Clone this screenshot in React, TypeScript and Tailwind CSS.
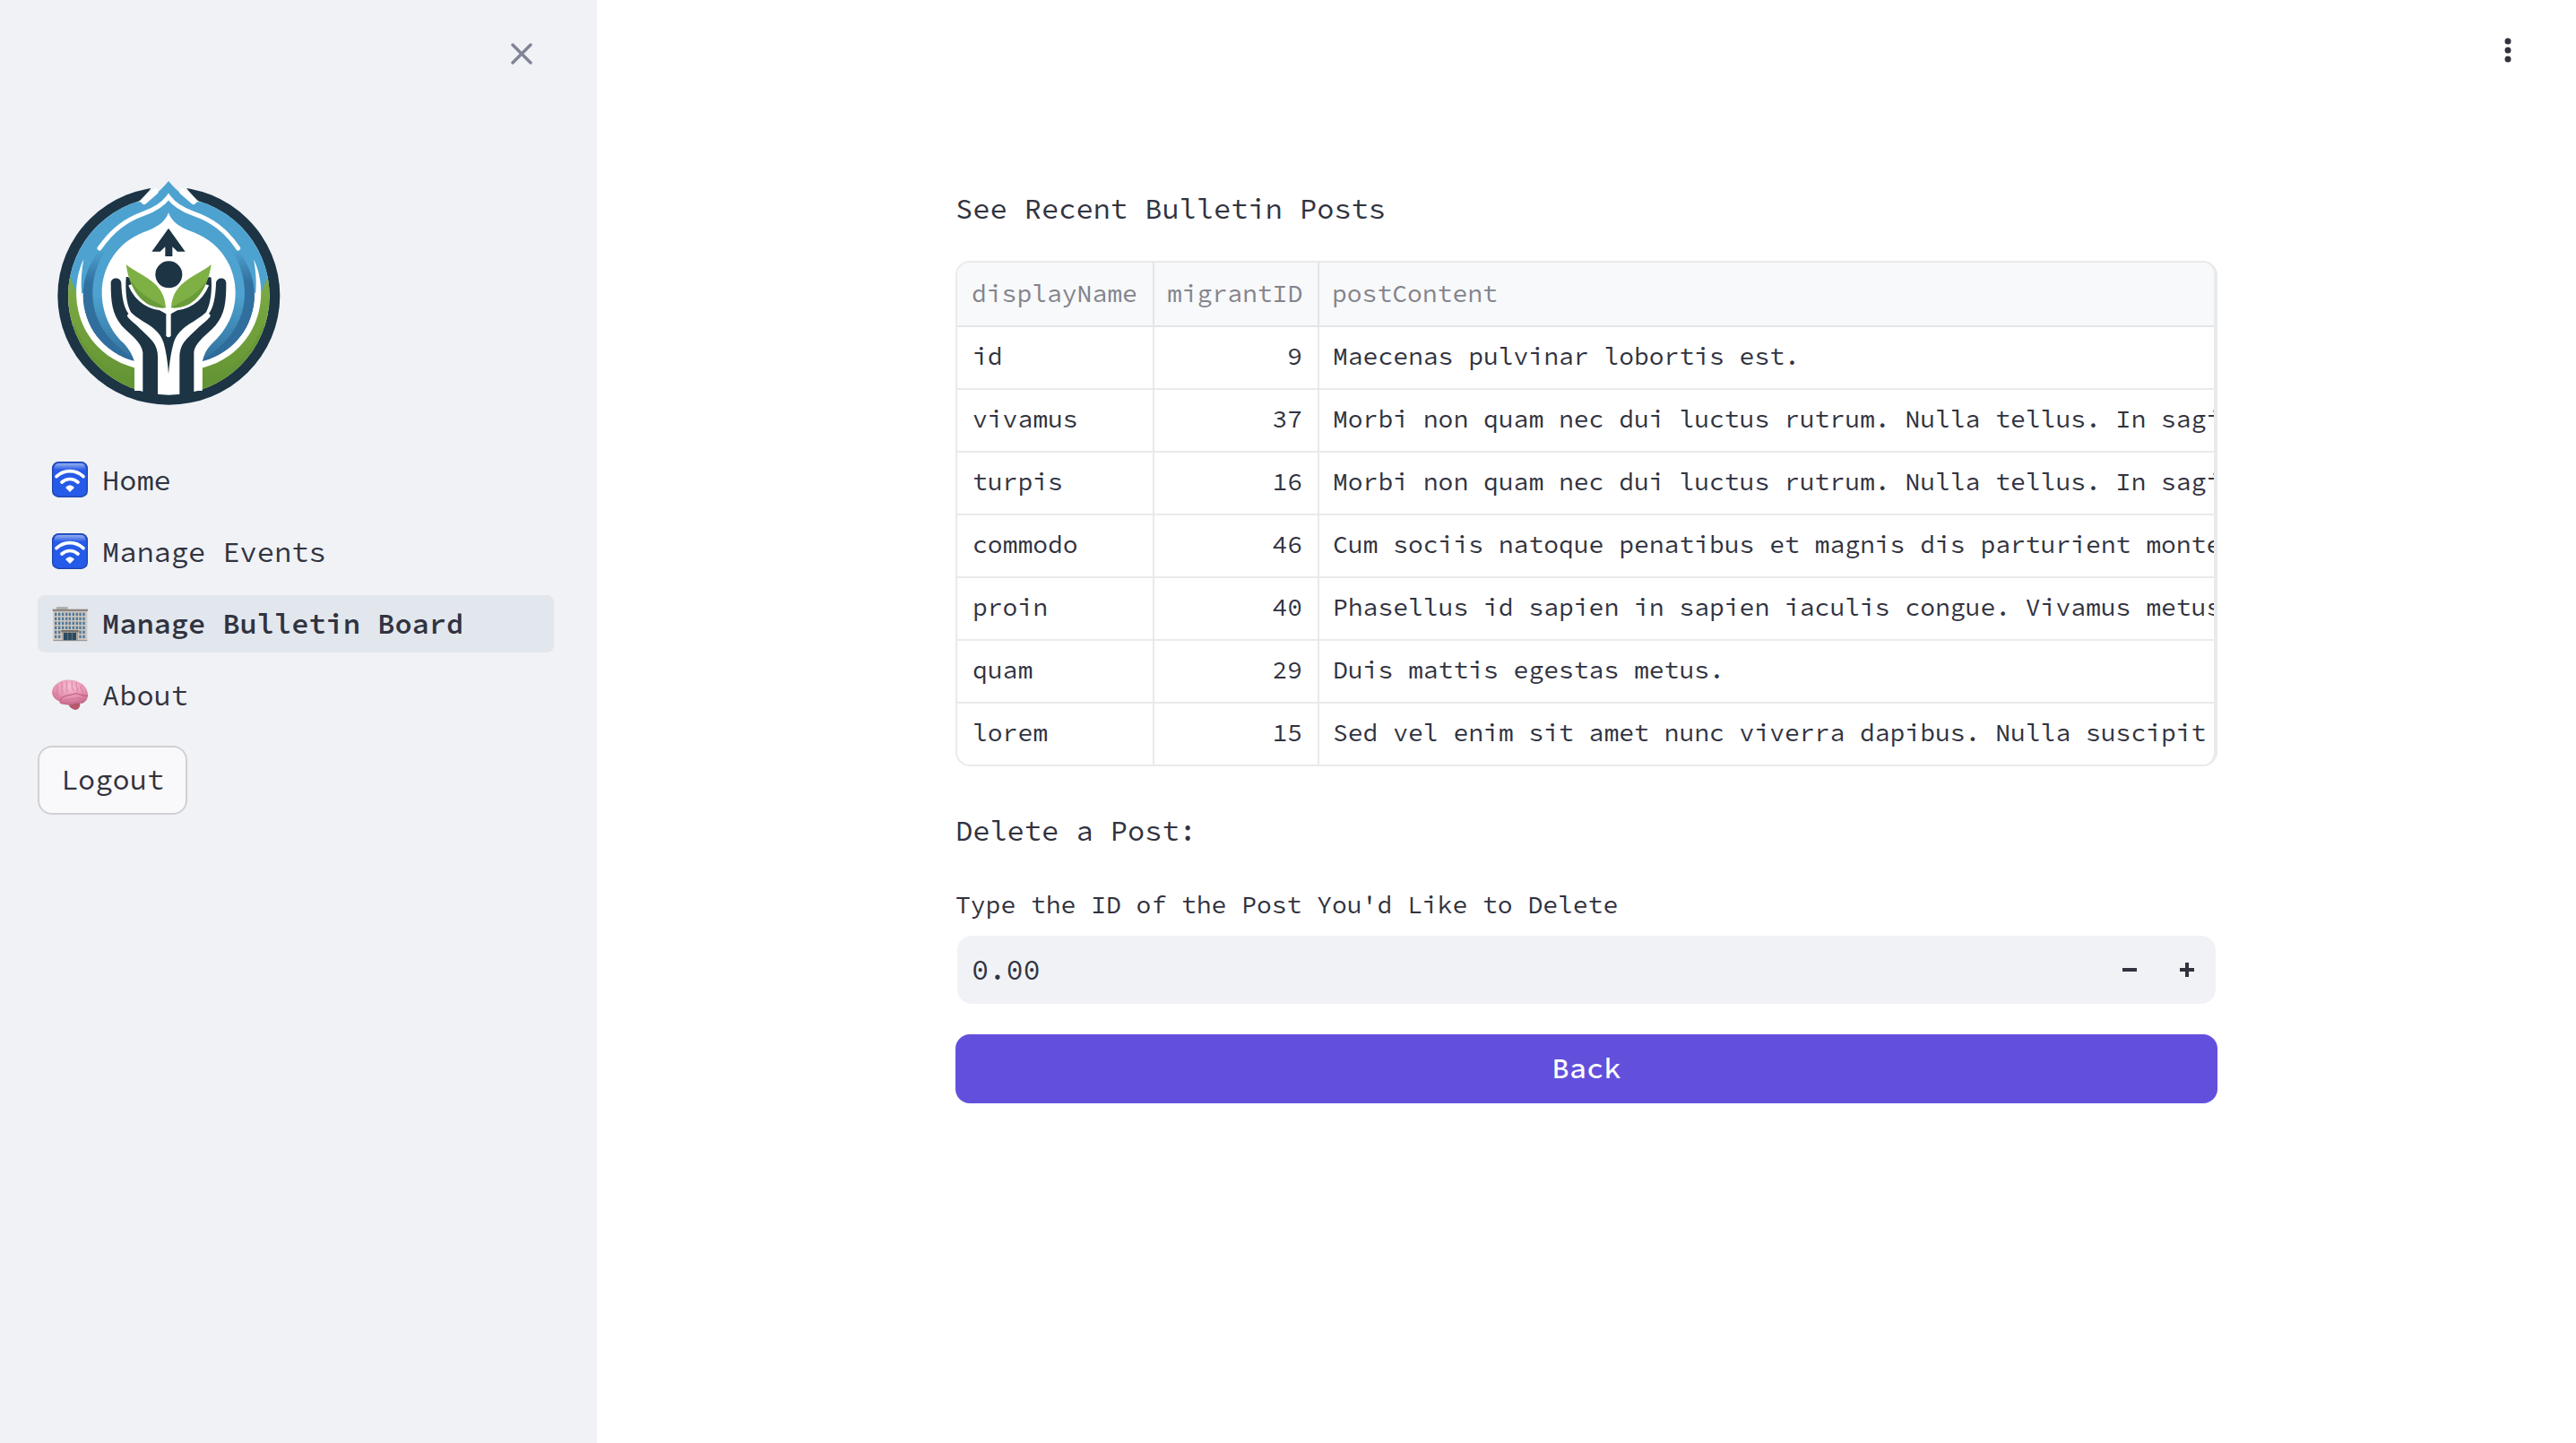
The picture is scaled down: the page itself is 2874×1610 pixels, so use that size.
import type { ReactNode } from 'react';

const NAVY = '#1c3444';

function Logo() {
  return (
    <svg viewBox="0 0 900 870" className="block h-[290px] w-[300px]">
      <defs>
        <linearGradient id="blueRing" x1="0" y1="0" x2="0" y2="1">
          <stop offset="0.3" stopColor="#4da2d0" />
          <stop offset="0.5" stopColor="#32719f" />
          <stop offset="1" stopColor="#2f6c9c" />
        </linearGradient>
        <linearGradient id="blueInner" x1="0" y1="0" x2="0" y2="1">
          <stop offset="0.6" stopColor="#4da2d0" />
          <stop offset="1" stopColor="#33739f" />
        </linearGradient>
        <linearGradient id="greenBand" x1="0" y1="0" x2="0" y2="1">
          <stop offset="0" stopColor="#80ae45" />
          <stop offset="1" stopColor="#619132" />
        </linearGradient>
        <clipPath id="disc">
          <ellipse cx="445" cy="450" rx="337" ry="332" />
        </clipPath>
      </defs>

      {/* outer ring */}
      <ellipse cx="445" cy="450" rx="372" ry="365" fill={NAVY} />
      <path d="M383 94 L400 60 H490 L507 94 Q520 110 560 150 H330 Q370 110 383 94Z" fill="#f0f2f6" />
      <ellipse cx="445" cy="450" rx="337" ry="332" fill="#fff" />

      {/* sky and grass bands */}
      <g clipPath="url(#disc)">
        <path d="M100 136 H790 V400 L751 452 L700 420 H190 L139 452 L100 400Z" fill="#4da2d0" />
        <path d="M100 350 L140 452 C150 550 210 650 330 690 V790 H100Z" fill="url(#greenBand)" />
        <path d="M790 350 L750 452 C740 550 680 650 557 690 V790 H790Z" fill="url(#greenBand)" />
        <path d="M128 545 C170 650 230 700 332 730 V790 H100Z M762 545 C720 650 660 700 557 730 V790 H790Z" fill="#649536" opacity=".75" />
      </g>

      {/* flame-shaped sky */}
      <path
        d="M444 66 C480 108 508 128 555 145 C640 178 700 240 740 320 L700 420 H190 L150 320 C190 240 250 178 335 145 C380 128 410 108 444 66Z"
        fill="#4da2d0"
      />
      <path
        d="M444 138 C475 180 510 192 560 212 C665 255 732 350 732 450 C732 550 665 640 559 670 L330 670 C225 640 158 550 158 450 C158 350 225 255 328 212 C380 192 413 180 444 138Z"
        fill="url(#blueRing)"
      />
      <path
        d="M444 138 C475 180 510 192 560 212 C645 250 699 350 699 440 C699 540 640 610 570 655 H320 C250 610 190 540 190 440 C190 350 245 250 328 212 C380 192 413 180 444 138Z"
        fill="url(#blueInner)"
      />

      {/* white drop */}
      <path
        d="M444 172 C462 218 500 225 545 245 C625 282 668 360 668 440 C668 505 640 565 590 610 C570 630 562 650 557 672 V768 H330 V672 C325 650 312 630 295 610 C250 570 221 505 221 440 C221 360 265 282 343 245 C388 225 426 218 444 172Z"
        fill="#fff"
      />

      {/* white outlines */}
      <g fill="none" stroke="#fff" strokeLinecap="round" strokeLinejoin="miter">
        <path d="M213 291 C260 225 305 195 360 175 C402 160 425 145 444 119 C463 145 486 160 528 175 C585 195 632 225 677 291" strokeWidth="15" />
        <path d="M362 134 L400 101 M528 134 L490 101" strokeWidth="20" />
      </g>
      <path d="M160 328 C125 400 125 500 175 580 C210 635 265 675 334 692 V670 C270 655 215 612 185 560 C150 490 145 405 160 328Z" fill="#fff" />
      <path d="M729 328 C764 400 764 500 714 580 C679 635 624 675 555 692 V670 C619 655 674 612 704 560 C739 490 744 405 729 328Z" fill="#fff" />

      {/* figure with arrow */}
      <path d="M444 224 L500 302 H474 L457 286 V318 H433 V286 L416 302 H388Z" fill={NAVY} />
      <circle cx="445" cy="379" r="45" fill={NAVY} />

      {/* arms and hands */}
      <path
        d="M251 408 C251 386 285 386 286 408 C287 450 295 495 312 512 C325 545 370 575 393 605 Q408 625 408 655 V780 H358 V640 C354 605 315 580 287 550 C255 510 251 470 251 408Z"
        fill={NAVY}
      />
      <path
        d="M637 408 C637 386 605 386 603 408 C602 450 594 495 577 512 C564 545 519 575 496 605 Q481 625 481 655 V780 H529 V640 C533 605 574 580 601 550 C633 510 637 470 637 408Z"
        fill={NAVY}
      />
      <path
        d="M302 388 C309 384 314 390 318 400 C345 460 395 488 436 511 V584 Q444 594 452 584 V511 C495 488 545 460 572 400 C575 388 581 384 587 390 C590 430 586 475 570 505 C535 540 480 550 461 608 Q449 650 444 712 Q440 650 428 608 C410 550 350 540 318 505 C302 475 299 430 302 388Z"
        fill={NAVY}
      />
      <path d="M313 517 C345 555 395 570 410 612 M577 517 C545 555 495 570 480 612" fill="none" stroke="#fff" strokeWidth="14" strokeLinecap="round" />

      {/* leaves */}
      <path d="M318 412 C340 465 385 492 435 490 M571 412 C549 465 504 492 453 490" fill="none" stroke="#fff" strokeWidth="18" />
      <path d="M302 345 C350 385 430 400 435 490 C365 495 315 440 302 345Z" fill="#7fb045" />
      <path d="M587 345 C540 385 458 400 453 490 C523 495 574 440 587 345Z" fill="#7fb045" />
      <path d="M318 400 C350 450 395 465 435 490 C375 495 335 455 318 400Z M571 400 C539 450 494 465 453 490 C514 495 554 455 571 400Z" fill="#699b3a" />
    </svg>
  );
}

function WifiEmoji() {
  return (
    <svg viewBox="0 0 180 180" className="h-[60px] w-[60px] shrink-0">
      <defs>
        <linearGradient id="gloss" x1="0" y1="0" x2="0" y2="1">
          <stop offset="0" stopColor="#94b0ee" />
          <stop offset="1" stopColor="#2a5ce6" />
        </linearGradient>
      </defs>
      <rect x="24" y="30" width="120" height="120" rx="22" fill="#1e45ad" />
      <rect x="28" y="34" width="112" height="112" rx="19" fill="#265ae8" />
      <path d="M32 52 Q32 36 48 36 H120 Q136 36 136 52 V58 H32Z" fill="url(#gloss)" />
      <g fill="none" stroke="#fff" strokeWidth="11" strokeLinecap="round">
        <path d="M39 80 C65 56 103 56 129 80" />
        <path d="M57 99 C73 85 95 85 111 99" />
      </g>
      <path d="M69 117 Q84 101 99 117 L84 132Z" fill="#fff" />
    </svg>
  );
}

function OfficeEmoji() {
  const cols = [33, 45, 57, 69, 80, 92, 104, 115, 127];
  const rows = [56, 71, 86, 101, 116, 131];
  return (
    <svg viewBox="0 0 180 180" className="h-[60px] w-[60px] shrink-0">
      <rect x="39" y="36" width="38" height="9" fill="#b4b0aa" />
      <rect x="28" y="48" width="114" height="102" fill="#cbc6bf" />
      <rect x="26" y="44" width="118" height="7" fill="#8d8683" />
      {rows.map((y) =>
        cols.map((x) => <rect key={`${x}-${y}`} x={x} y={y} width="7" height="10" fill="#51789a" />),
      )}
      <rect x="57" y="114" width="54" height="36" fill="#aaa39b" />
      <rect x="55" y="114" width="58" height="7" fill="#77706d" />
      <rect x="63" y="123" width="42" height="27" fill="#2b4a61" />
      <path d="M77 123 V150 M91 123 V150" stroke="#8a8783" strokeWidth="2" />
      <path d="M28 149 H142" stroke="#93908c" strokeWidth="3" />
    </svg>
  );
}

function BrainEmoji() {
  return (
    <svg viewBox="0 0 180 180" className="h-[60px] w-[60px] shrink-0">
      <defs>
        <radialGradient id="brainFill" cx="0.5" cy="0.25" r="0.8">
          <stop offset="0" stopColor="#f7c0d3" />
          <stop offset="0.6" stopColor="#e58dad" />
          <stop offset="1" stopColor="#bd5f80" />
        </radialGradient>
      </defs>
      <path d="M78 120 Q92 112 118 114 Q121 137 104 141 Q94 141 90 136 Q84 134 78 120Z" fill="#b55a6c" />
      <path
        d="M50 113 C32 106 21 92 25 76 C29 58 44 50 56 44 C72 38 98 40 112 47 C130 54 142 70 144 88 C145 104 138 114 124 120 C112 118 104 118 90 124 C78 126 70 123 60 122 C51 120 48 117 50 113Z"
        fill="url(#brainFill)"
      />
      <g fill="none" stroke="#cc7394" strokeWidth="2.5" strokeLinecap="round">
        <path d="M40 60 C48 66 38 76 42 90" />
        <path d="M56 50 C62 62 52 72 60 84" />
        <path d="M72 46 C78 58 68 68 76 80" />
        <path d="M90 46 C94 56 86 64 96 76" />
        <path d="M106 50 C100 62 114 68 108 80" />
        <path d="M122 60 C116 70 130 76 126 88" />
        <path d="M52 108 C56 92 82 94 96 88 C110 82 124 96 142 94" stroke="#a94a6e" />
        <path d="M66 112 C76 100 92 108 104 102 C114 98 126 106 134 106" />
        <path d="M32 84 C38 90 46 92 52 98" />
      </g>
    </svg>
  );
}

function NavItem({ icon, label, active }: { icon: ReactNode; label: string; active?: boolean }) {
  return (
    <a className={`flex h-16 items-center rounded-lg pl-2 ${active ? 'bg-[#e2e7ee] font-semibold' : ''}`}>
      <span className="mb-0.5 flex">{icon}</span>
      <span className="ml-1 whitespace-pre leading-none">{label}</span>
    </a>
  );
}

const posts: [string, number, string][] = [
  ['id', 9, 'Maecenas pulvinar lobortis est.'],
  ['vivamus', 37, 'Morbi non quam nec dui luctus rutrum. Nulla tellus. In sagi'],
  ['turpis', 16, 'Morbi non quam nec dui luctus rutrum. Nulla tellus. In sagi'],
  ['commodo', 46, 'Cum sociis natoque penatibus et magnis dis parturient monte'],
  ['proin', 40, 'Phasellus id sapien in sapien iaculis congue. Vivamus metus'],
  ['quam', 29, 'Duis mattis egestas metus.'],
  ['lorem', 15, 'Sed vel enim sit amet nunc viverra dapibus. Nulla suscipit'],
];

export default function App() {
  return (
    <div className="flex h-[1610px] w-full overflow-hidden bg-white font-['Source_Code_Pro','Liberation_Mono',monospace] text-[32px] text-[#31333f]">
      <aside className="flex w-[666px] shrink-0 flex-col bg-[#f0f2f6]">
        <div className="flex h-[180px] justify-end pr-[72px] pt-12">
          <svg viewBox="0 0 24 24" className="h-6 w-6" fill="none" stroke="#808495" strokeWidth="3.4" strokeLinecap="round">
            <path d="M2 2 L22 22 M22 2 L2 22" />
          </svg>
        </div>
        <div className="pl-10">
          <Logo />
        </div>
        <nav className="mt-[34px] flex flex-col gap-4 pl-[42px] pr-12">
          <NavItem icon={<WifiEmoji />} label="Home" />
          <NavItem icon={<WifiEmoji />} label="Manage Events" />
          <NavItem icon={<OfficeEmoji />} label="Manage Bulletin Board" active />
          <NavItem icon={<BrainEmoji />} label="About" />
        </nav>
        <button className="ml-[42px] mt-6 flex h-[77px] w-[167px] items-center justify-center rounded-2xl border-2 border-[#d0d1d6] bg-[#f9f9fb] pb-px leading-none">
          Logout
        </button>
      </aside>

      <main className="flex min-w-0 flex-1 flex-col">
        <header className="flex h-52 shrink-0 justify-end pr-[72px] pt-[42px]">
          <svg viewBox="0 0 8 28" className="h-7 w-2" fill="#31333f">
            <circle cx="4" cy="4" r="3.5" />
            <circle cx="4" cy="14" r="3.5" />
            <circle cx="4" cy="24" r="3.5" />
          </svg>
        </header>
        <div className="mx-auto flex w-[1408px] flex-col">
          <p className="h-[51px] leading-[51px]">See Recent Bulletin Posts</p>

          <div className="mt-8 flex h-[564px] w-full flex-col overflow-hidden rounded-2xl border-2 border-r-4 border-[#e9eaeb] text-[28px]">
            <div className="grid h-[72px] shrink-0 grid-cols-[220px_184px_1fr] border-b-2 border-[#e4e5e9] bg-[#f8f9fb] leading-[68px] text-[#83848c]">
              <div className="border-r-2 border-[#e4e5e9] pl-4">displayName</div>
              <div className="border-r-2 border-[#e4e5e9] pl-3.5">migrantID</div>
              <div className="pl-3.5">postContent</div>
            </div>
            {posts.map(([name, id, content]) => (
              <div
                key={name}
                className="grid h-[70px] shrink-0 grid-cols-[220px_184px_minmax(0,1fr)] border-b-2 border-[#e9eaeb] leading-[65px] last:border-b-0"
              >
                <div className="border-r-2 border-[#e9eaeb] pl-[17px]">{name}</div>
                <div className="border-r-2 border-[#e9eaeb] pr-[17px] text-right">{id}</div>
                <div className="overflow-hidden whitespace-nowrap pl-[15px]">{content}</div>
              </div>
            ))}
          </div>

          <p className="mt-[47px] h-[51px] leading-[51px]">Delete a Post:</p>
          <label className="mt-[34px] h-[45px] text-[28px] leading-[45px]">Type the ID of the Post You'd Like to Delete</label>
          <div className="mx-0.5 mt-3 flex h-[76px] items-center rounded-2xl bg-[#f0f2f6] pl-4">
            <span className="flex-1 leading-none">0.00</span>
            <button className="flex h-full w-16 items-center justify-center">
              <svg viewBox="0 0 16 16" className="h-4 w-4" fill="#31333f">
                <path d="M0 6 H16 V10 H0Z" />
              </svg>
            </button>
            <button className="flex h-full w-16 items-center justify-center">
              <svg viewBox="0 0 16 16" className="h-4 w-4" fill="#31333f">
                <path d="M6 0 H10 V6 H16 V10 H10 V16 H6 V10 H0 V6 H6Z" />
              </svg>
            </button>
          </div>
          <button className="mt-[34px] flex h-[77px] items-center justify-center rounded-2xl bg-[#6250dd] pb-px font-medium leading-none text-white">
            Back
          </button>
        </div>
      </main>
    </div>
  );
}
